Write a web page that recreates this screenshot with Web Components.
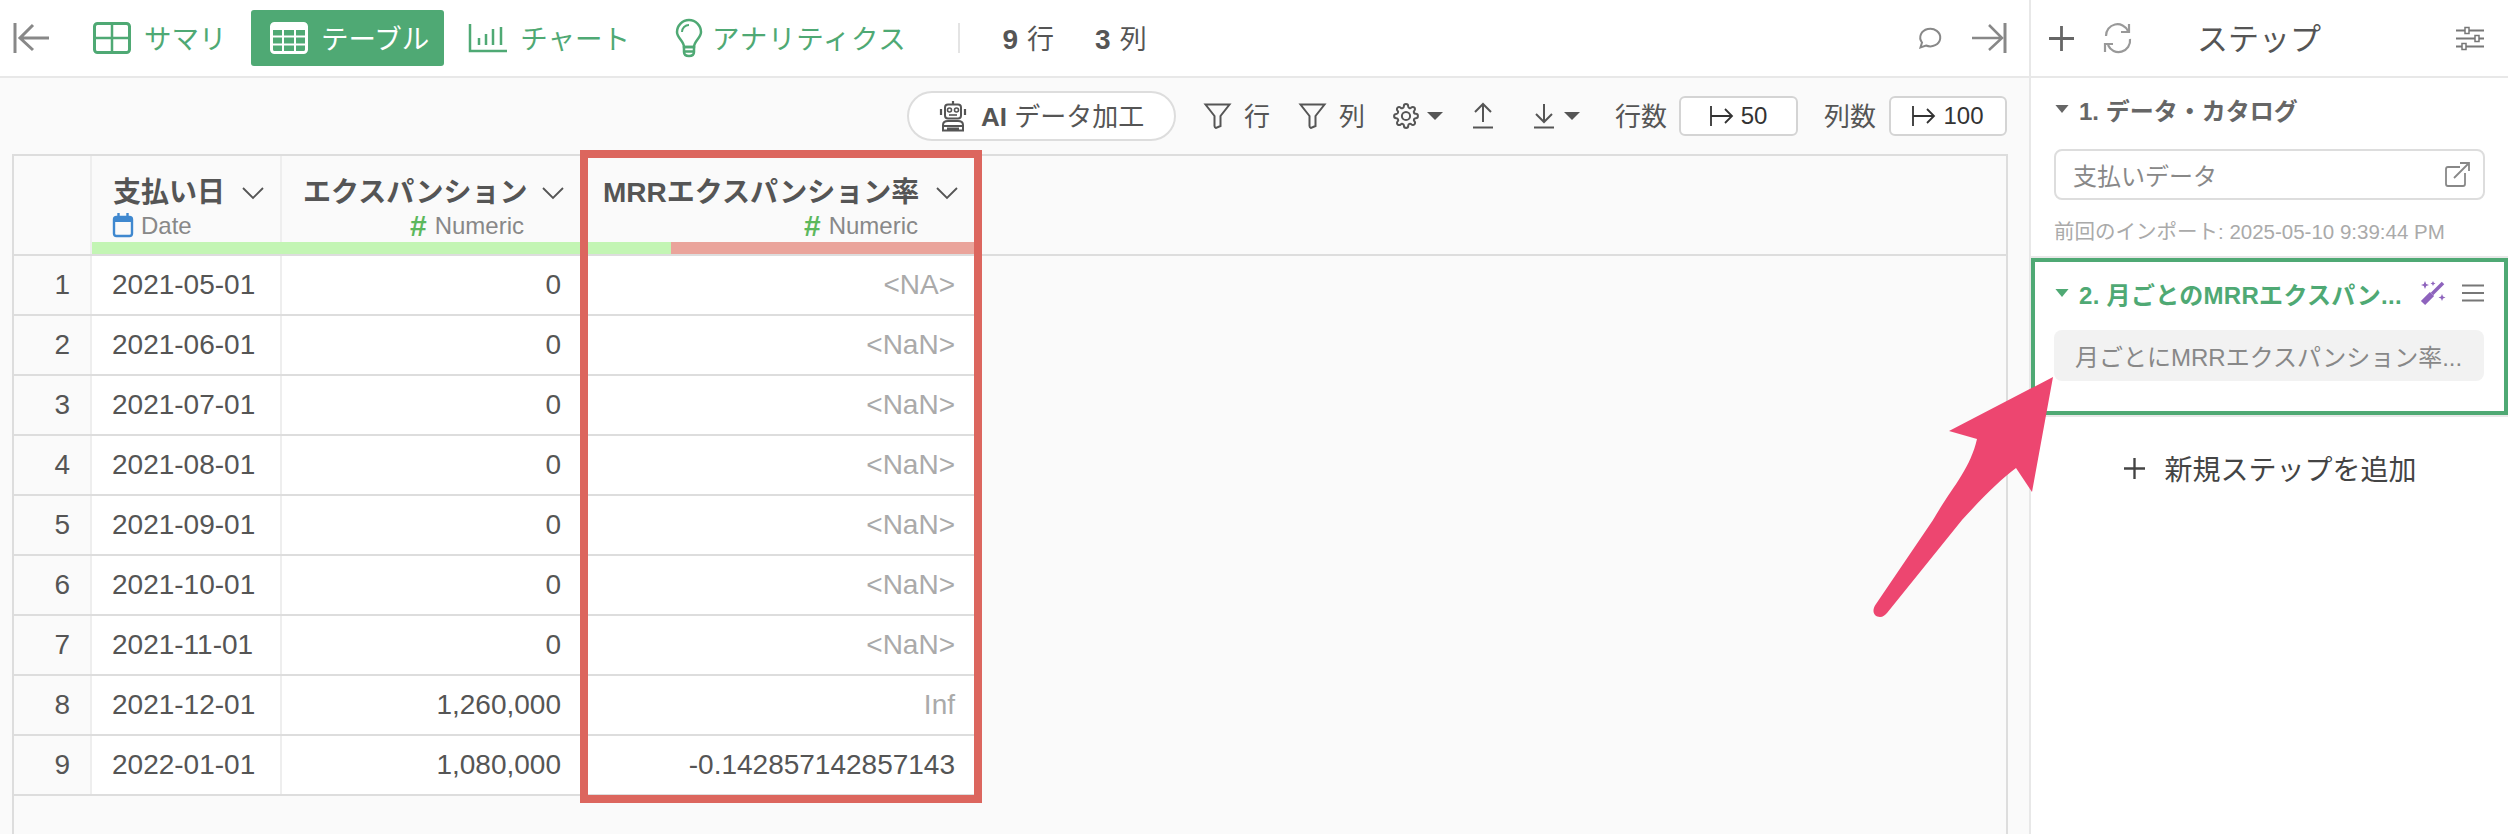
<!DOCTYPE html>
<html lang="ja">
<head>
<meta charset="utf-8">
<title>テーブル</title>
<style>
  html, body { margin: 0; height: 100%; background: #fff; }
  body { font-family: "Liberation Sans", "Noto Sans CJK JP", sans-serif; color: #555; overflow: hidden; }
</style>
</head>
<body>
<app-shell>
  <top-bar slot="main"></top-bar>
  <tool-bar slot="main"></tool-bar>
  <data-table slot="main"></data-table>
  <step-panel slot="side">
    <step-card title-text="1. データ・カタログ" note="前回のインポート: 2025-05-10 9:39:44 PM">支払いデータ</step-card>
    <step-card active title-text="2. 月ごとのMRRエクスパン...">月ごとにMRRエクスパンション率...</step-card>
  </step-panel>
</app-shell>
<arrow-note></arrow-note>

<script>
const GREEN = "#4fa974";

// every icon: [width, height, inner svg]. strokes use currentColor
const ICONS = {
  back: [38, 32, '<path d="M2 1V31" stroke-width="3"/><path d="M36 16H8M20 3 7 16l13 12" stroke-width="3"/>'],
  forward: [36, 32, '<path d="M34 1V31" stroke-width="3"/><path d="M1 16H30M18 3l13 13-13 12" stroke-width="2.5"/>'],
  summary: [38, 32, '<rect x="1.5" y="1.5" width="35" height="29" rx="3" stroke-width="3"/><path d="M19 2V30M2 16H36" stroke-width="2.5"/>'],
  table: [38, 32, '<rect x="1.5" y="1.5" width="35" height="29" rx="3" stroke-width="3"/><path d="M2 5H36" stroke-width="6"/><path d="M13 6V30M25 6V30M2 14.500H36M2 22.500H36" stroke-width="2"/>'],
  chart: [38, 28, '<path d="M1 0V27H38" stroke-width="2.500"/><path d="M10 14V21M17 10V21M24 5V21M32 3V21" stroke-width="2.500"/>'],
  bulb: [28, 40, '<path d="M9 29C9 23 2 20 2 14A12 12 0 1 1 26 14C26 20 19 23 19 29Z" stroke-width="2.500"/><path d="M9 29H19V34Q19 38 14 38T9 34ZM9 33.500H19" stroke-width="2.500"/><path d="M7 14A7 7 0 0 1 14 7" stroke-width="2"/>'],
  comment: [26, 22, '<path d="M4 15.500A10 8.800 0 1 1 8 18.500L2.500 20.500Z" stroke-width="2"/>'],
  robot: [28, 32, '<path d="M14 1V4M2 9V15M26 9V15" stroke-width="2.200"/><rect x="6" y="4.500" width="16" height="14" rx="3" stroke-width="2"/><circle cx="10.500" cy="10" r="2" stroke-width="1.600"/><circle cx="17.500" cy="10" r="2" stroke-width="1.600"/><path d="M10 15H18" stroke-width="1.600"/><path d="M4 30.500V25Q4 21 9 21H19Q24 21 24 25V30.500ZM4 26H24M8 28.500H20" stroke-width="2"/>'],
  filter: [27, 26, '<path d="M1.500 1.500H25.500L16.500 13V23L12 25Q10.500 24.500 10.500 23V13Z" stroke-width="2"/>'],
  gear: [26, 26, '<g transform="scale(1.083)"><path stroke-width="1.850" d="M19.400 15a1.650 1.650 0 0 0 .33 1.820l.06.06a2 2 0 0 1 0 2.830 2 2 0 0 1-2.830 0l-.06-.06a1.650 1.650 0 0 0-1.820-.33 1.650 1.650 0 0 0-1 1.510V21a2 2 0 0 1-2 2 2 2 0 0 1-2-2v-.09A1.650 1.650 0 0 0 9 19.400a1.650 1.650 0 0 0-1.820.33l-.06.06a2 2 0 0 1-2.830 0 2 2 0 0 1 0-2.830l.06-.06a1.650 1.650 0 0 0 .33-1.820 1.650 1.650 0 0 0-1.510-1H3a2 2 0 0 1-2-2 2 2 0 0 1 2-2h.09A1.650 1.650 0 0 0 4.600 9a1.650 1.650 0 0 0-.33-1.820l-.06-.06a2 2 0 0 1 0-2.830 2 2 0 0 1 2.830 0l.06.06a1.650 1.650 0 0 0 1.820.33H9a1.650 1.650 0 0 0 1-1.510V3a2 2 0 0 1 2-2 2 2 0 0 1 2 2v.09a1.650 1.650 0 0 0 1 1.510 1.650 1.650 0 0 0 1.820-.33l.06-.06a2 2 0 0 1 2.830 0 2 2 0 0 1 0 2.830l-.06.06a1.650 1.650 0 0 0-.33 1.820V9a1.650 1.650 0 0 0 1.510 1H21a2 2 0 0 1 2 2 2 2 0 0 1-2 2h-.09a1.650 1.650 0 0 0-1.510 1z"/><circle cx="12" cy="12" r="3.800" stroke-width="1.850"/></g>'],
  up: [20, 26, '<path d="M10 1V19M2 9l8-8 8 8" stroke-width="2"/><path d="M0 24.500H20" stroke-width="2"/>'],
  down: [20, 26, '<path d="M10 1V19M2 11l8 8 8-8" stroke-width="2"/><path d="M0 24.500H20" stroke-width="2"/>'],
  caret: [16, 8, '<path d="M0 0H16L8 8Z" fill="currentColor" stroke="none"/>'],
  limit: [24, 20, '<path d="M1 0V20" stroke-width="1.800"/><path d="M1 10H22M15 3l7 7-7 7" stroke-width="1.800"/>'],
  chevron: [22, 12, '<path d="M1 1l10 10L21 1" stroke-width="1.800"/>'],
  calendar: [20, 24, '<rect x="1" y="4" width="18" height="19" rx="2.500" stroke-width="2.400"/><path d="M1 7H19" stroke-width="4"/><path d="M5.500 0V5M14.500 0V5" stroke-width="2.400"/>'],
  plus: [25, 25, '<path d="M12.500 0V25M0 12.500H25" stroke-width="2.800"/>'],
  refresh: [30, 28, '<path d="M3 12A11.500 11.500 0 0 1 25 7M27 15A11.500 11.500 0 0 1 5 21" stroke-width="2.200"/><path d="M26 0V8H18M2 28V20H10" stroke-width="2.200"/>'],
  sliders: [28, 23, '<path d="M0 3.500H28M0 11.500H28M0 19.500H28" stroke-width="1.800"/><rect x="9" y="0.500" width="4" height="6" fill="#fff" stroke-width="1.500"/><rect x="19" y="8.500" width="4" height="6" fill="#fff" stroke-width="1.500"/><rect x="6" y="16.500" width="4" height="6" fill="#fff" stroke-width="1.500"/>'],
  external: [25, 25, '<path d="M15 5H3Q1 5 1 7V22Q1 24 3 24H18Q20 24 20 22V11" stroke-width="1.800"/><path d="M9 16 24 1M15 1H24V9" stroke-width="1.800"/>'],
  wand: [26, 26, '<path d="M3 23 12 14" stroke-width="6"/><path d="M12 14 23 3" stroke-width="3.600"/><path fill="currentColor" stroke="none" d="M5 1l1.200 3L9 5 6.200 6 5 9 3.800 6 1 5l2.800-1zM13 1l.8 1.700 1.700.8-1.700.8L13 6l-.8-1.700-1.700-.8 1.700-.8zM22 14l1 2.500 2.500 1-2.500 1L22 21l-1-2.500-2.500-1 2.500-1z"/>'],
  menu: [22, 18, '<path d="M0 1.500H22M0 9H22M0 16.500H22" stroke-width="2.200"/>']
};

class XIcon extends HTMLElement {
  connectedCallback() {
    const [w, h, body] = ICONS[this.getAttribute("name")];
    this.attachShadow({ mode: "open" }).innerHTML = `
      <style>
        :host { display: inline-flex; flex: none; line-height: 0; }
        svg { display: block; overflow: visible; fill: none; stroke: currentColor; }
      </style>
      <svg width="${w}" height="${h}" viewBox="0 0 ${w} ${h}">${body}</svg>`;
  }
}
customElements.define("x-icon", XIcon);

class AppShell extends HTMLElement {
  constructor() {
    super();
    this.attachShadow({ mode: "open" }).innerHTML = `
      <style>
        :host { display: grid; grid-template-columns: 2029px 479px; height: 834px; overflow: hidden; }
        .main { display: flex; flex-direction: column; background: #fafafa; height: 834px; overflow: hidden; }
        .side { border-left: 2px solid #e8e8e8; background: #fff; height: 834px; }
      </style>
      <div class="main"><slot name="main"></slot></div>
      <div class="side"><slot name="side"></slot></div>`;
  }
}
customElements.define("app-shell", AppShell);

class TabItem extends HTMLElement {
  connectedCallback() {
    const active = this.hasAttribute("active");
    this.attachShadow({ mode: "open" }).innerHTML = `
      <style>
        :host { display: inline-flex; align-items: center; gap: 13px; height: 56px; padding: 0 15px 0 19px; box-sizing: border-box;
                font-size: 27.500px; border-radius: 3px; color: ${active ? "#fff" : GREEN}; background: ${active ? GREEN : "transparent"}; }
        span { padding-bottom: 3px; }
      </style>
      <x-icon name="${this.getAttribute("icon")}"></x-icon><span><slot></slot></span>`;
  }
}
customElements.define("tab-item", TabItem);

class TopBar extends HTMLElement {
  constructor() {
    super();
    this.attachShadow({ mode: "open" }).innerHTML = `
      <style>
        :host { display: flex; align-items: center; height: 78px; box-sizing: border-box; flex: none; background: #fff;
                border-bottom: 2px solid #e8e8e8; }
        .back { color: #888; margin-left: 13px; margin-right: 23px; }
        .tabs { display: flex; align-items: center; }
        .sep { width: 2px; height: 30px; background: #e4e4e4; margin-left: 37px; }
        .count { font-size: 27px; margin-left: 42px; display: flex; align-items: baseline; gap: 9px; padding-bottom: 2px; }
        .count + .count { margin-left: 41px; }
        b { font-size: 28px; }
        .end { margin-left: auto; display: flex; align-items: center; color: #888; margin-right: 22px; }
        .end x-icon:first-child { margin-right: 27px; }
      </style>
      <x-icon class="back" name="back"></x-icon>
      <div class="tabs">
        <tab-item icon="summary">サマリ</tab-item>
        <tab-item icon="table" active style="margin-left:9.500px">テーブル</tab-item>
        <tab-item icon="chart" style="margin-left:6px">チャート</tab-item>
        <tab-item icon="bulb" style="margin-left:11px;gap:9px;letter-spacing:.7px">アナリティクス</tab-item>
      </div>
      <span class="sep"></span>
      <span class="count"><b>9</b><span>行</span></span>
      <span class="count"><b>3</b><span>列</span></span>
      <div class="end"><x-icon name="comment"></x-icon><x-icon name="forward"></x-icon></div>`;
  }
}
customElements.define("top-bar", TopBar);

class ToolBar extends HTMLElement {
  constructor() {
    super();
    this.attachShadow({ mode: "open" }).innerHTML = `
      <style>
        :host { display: flex; align-items: center; justify-content: flex-end; flex: none; height: 76px; box-sizing: border-box;
                padding-right: 22px; font-size: 26px; color: #555; }
        span { padding-bottom: 3px; }
        .ai { display: flex; align-items: center; height: 50px; width: 269px; box-sizing: border-box; padding-left: 30px; gap: 14px;
              background: #fff; border: 2px solid #ddd; border-radius: 25px; }
        .limit { display: flex; align-items: center; justify-content: center; gap: 7px; height: 40px; width: 119px; box-sizing: border-box;
                 background: #fff; border: 2px solid #d4d4d4; border-radius: 6px; font-size: 24px; color: #333; }
      </style>
      <div class="ai"><x-icon name="robot"></x-icon><span><b>AI</b> データ加工</span></div>
      <x-icon name="filter" style="margin-left:28px"></x-icon><span style="margin-left:13px">行</span>
      <x-icon name="filter" style="margin-left:29px"></x-icon><span style="margin-left:13px">列</span>
      <x-icon name="gear" style="margin-left:28px"></x-icon><x-icon name="caret" style="margin-left:8px"></x-icon>
      <x-icon name="up" style="margin-left:30px"></x-icon>
      <x-icon name="down" style="margin-left:41px"></x-icon><x-icon name="caret" style="margin-left:10px"></x-icon>
      <span style="margin-left:35px">行数</span><div class="limit" style="margin-left:12px"><x-icon name="limit"></x-icon>50</div>
      <span style="margin-left:26px">列数</span><div class="limit" style="margin-left:13px;width:118px"><x-icon name="limit"></x-icon>100</div>`;
  }
}
customElements.define("tool-bar", ToolBar);

const COLUMNS = "78px 190px 300px 394px";
const ROWS = [
  ["2021-05-01", "0", "<NA>"],
  ["2021-06-01", "0", "<NaN>"],
  ["2021-07-01", "0", "<NaN>"],
  ["2021-08-01", "0", "<NaN>"],
  ["2021-09-01", "0", "<NaN>"],
  ["2021-10-01", "0", "<NaN>"],
  ["2021-11-01", "0", "<NaN>"],
  ["2021-12-01", "1,260,000", "Inf"],
  ["2022-01-01", "1,080,000", "-0.142857142857143"]
];

const esc = s => s.replace(/</g, "&lt;").replace(/>/g, "&gt;");

class DataTable extends HTMLElement {
  constructor() {
    super();
    const rows = ROWS.map((r, i) => {
      const dim = /^(<|Inf)/.test(r[2]) ? " dim" : "";
      return `<div class="row">
        <div class="cell num">${i + 1}</div>
        <div class="cell">${r[0]}</div>
        <div class="cell right">${r[1]}</div>
        <div class="cell right${dim}">${esc(r[2])}</div>
      </div>`;
    }).join("");
    this.attachShadow({ mode: "open" }).innerHTML = `
      <style>
        :host { display: block; position: relative; flex: 1; width: 1996px; margin-left: 12px; box-sizing: border-box; background: #fafafa;
                border: 2px solid #ddd; border-bottom: 0; font-size: 28px; color: #555; }
        .head { display: grid; grid-template-columns: ${COLUMNS} 1fr; height: 100px; box-sizing: border-box; border-bottom: 2px solid #ddd; }
        .col { display: flex; flex-direction: column; border-right: 2px solid #eee; padding-top: 17px; box-sizing: border-box; min-width: 0; }
        .blank { border-right: 0; }
        .name { display: flex; align-items: center; justify-content: space-between; height: 34px; padding: 0 16px 0 21px; font-weight: 700; white-space: nowrap; }
        .name x-icon { color: #555; margin-top: 5px; }
        .type { display: flex; align-items: center; gap: 8px; height: 30px; margin-top: 4px; padding: 0 56px 0 21px; font-size: 24px; color: #888; }
        .type.n { justify-content: flex-end; }
        .type x-icon { margin-bottom: 2px; }
        .hash { color: #5cb85c; font-weight: 700; font-size: 30px; line-height: 1; }
        .bar { display: flex; height: 12px; margin-top: auto; background: #c3f5b4; margin-right: -2px; }
        .bar i { display: block; margin-left: 89px; flex: 1; background: #eaa49b; }
        .row { display: grid; grid-template-columns: ${COLUMNS}; height: 60px; box-sizing: border-box; width: 962px; background: #fff; border-bottom: 2px solid #ddd; }
        .cell { display: flex; align-items: center; padding: 0 19px 0 20px; box-sizing: border-box; border-right: 2px solid #eee; white-space: nowrap; }
        .num { justify-content: flex-end; padding-right: 20px; background: #fafafa; }
        .right { justify-content: flex-end; }
        .dim { color: #aaa; }
        .mark { position: absolute; left: 566px; top: -6px; width: 402px; height: 653px; box-sizing: border-box; border: 8px solid #dc665e; }
      </style>
      <div class="head">
        <div class="col"></div>
        <div class="col">
          <div class="name">支払い日<x-icon name="chevron"></x-icon></div>
          <div class="type"><x-icon name="calendar" style="color:#3f88cf"></x-icon>Date</div>
          <div class="bar"></div>
        </div>
        <div class="col">
          <div class="name">エクスパンション<x-icon name="chevron"></x-icon></div>
          <div class="type n"><span class="hash">#</span>Numeric</div>
          <div class="bar"></div>
        </div>
        <div class="col">
          <div class="name">MRRエクスパンション率<x-icon name="chevron"></x-icon></div>
          <div class="type n"><span class="hash">#</span>Numeric</div>
          <div class="bar"><i></i></div>
        </div>
        <div class="col blank"></div>
      </div>
      ${rows}
      <div class="mark"></div>`;
  }
}
customElements.define("data-table", DataTable);

class StepPanel extends HTMLElement {
  constructor() {
    super();
    this.attachShadow({ mode: "open" }).innerHTML = `
      <style>
        :host { display: block; }
        .head { display: flex; align-items: center; height: 78px; box-sizing: border-box; border-bottom: 2px solid #e8e8e8; color: #666; }
        .title { font-size: 31px; color: #555; margin-left: 64px; padding-bottom: 3px; }
        .add { display: flex; align-items: center; justify-content: center; gap: 20px; margin-top: 26px; height: 50px; font-size: 28px; color: #444; }
        .add x-icon { transform: scale(.84); margin-right: -3px; color: #444; }
      </style>
      <div class="head">
        <x-icon name="plus" style="margin-left:18px"></x-icon>
        <x-icon name="refresh" style="margin-left:29px;color:#999"></x-icon>
        <span class="title">ステップ</span>
        <x-icon name="sliders" style="margin-left:auto;margin-right:24px;color:#777"></x-icon>
      </div>
      <slot></slot>
      <div class="add"><x-icon name="plus"></x-icon><span>新規ステップを追加</span></div>`;
  }
}
customElements.define("step-panel", StepPanel);

class StepCard extends HTMLElement {
  connectedCallback() {
    const active = this.hasAttribute("active");
    const note = this.getAttribute("note");
    this.attachShadow({ mode: "open" }).innerHTML = `
      <style>
        :host { display: block; box-sizing: border-box; height: ${active ? 159 : 180}px; border-bottom: 2px solid #e8e8e8; }
        .wrap { box-sizing: border-box; height: 100%; padding: ${active ? "14px 20px 0 19px" : "14px 23px 0 23px"}; ${active ? `border: 4px solid ${GREEN};` : ""} }
        .title { display: flex; align-items: center; gap: 9px; height: 34px; font-size: 24px; font-weight: 700; white-space: nowrap; color: ${active ? GREEN : "#666"}; letter-spacing: ${active ? ".3px" : "0"}; }
        .title x-icon.caret { transform: scale(.82, 1); }
        .wand { color: #8e63bd; margin-left: 9px; }
        .menu { color: #777; margin-left: auto; }
        .box { display: flex; align-items: center; justify-content: space-between; box-sizing: border-box; height: 51px; margin-top: ${active ? 20 : 23}px;
               padding: 0 13px 0 ${active ? 21 : 17}px; border-radius: 8px; font-size: 24px; color: #888; white-space: nowrap;
               ${active ? "background: #f2f2f2;" : "border: 2px solid #ddd; background: #fff;"} }
        .note { font-size: 20.500px; color: #aaa; margin-top: 15px; white-space: nowrap; }
      </style>
      <div class="wrap">
        <div class="title"><x-icon class="caret" name="caret"></x-icon><span>${this.getAttribute("title-text")}</span>
          ${active ? '<x-icon class="wand" name="wand"></x-icon><x-icon class="menu" name="menu"></x-icon>' : ""}</div>
        <div class="box"><slot></slot>${active ? "" : '<x-icon name="external" style="color:#888"></x-icon>'}</div>
        ${note ? `<div class="note">${note}</div>` : ""}
      </div>`;
  }
}
customElements.define("step-card", StepCard);

// pink callout drawn over the page, points at the active step
class ArrowNote extends HTMLElement {
  constructor() {
    super();
    this.attachShadow({ mode: "open" }).innerHTML = `
      <style>:host { position: absolute; left: 0; top: 0; pointer-events: none; } svg { display: block; }</style>
      <svg width="2508" height="834" viewBox="0 0 2508 834">
        <path fill="#ed4670" d="M2053 377 1949 431 1977 439C1970 470 1950 490 1933 520L1876 604C1871 611 1874 617 1880 617C1883 617 1885 615 1887 613L1962 520C1985 495 2000 480 2016 468L2032 492Z"/>
      </svg>`;
  }
}
customElements.define("arrow-note", ArrowNote);
</script>
</body>
</html>
